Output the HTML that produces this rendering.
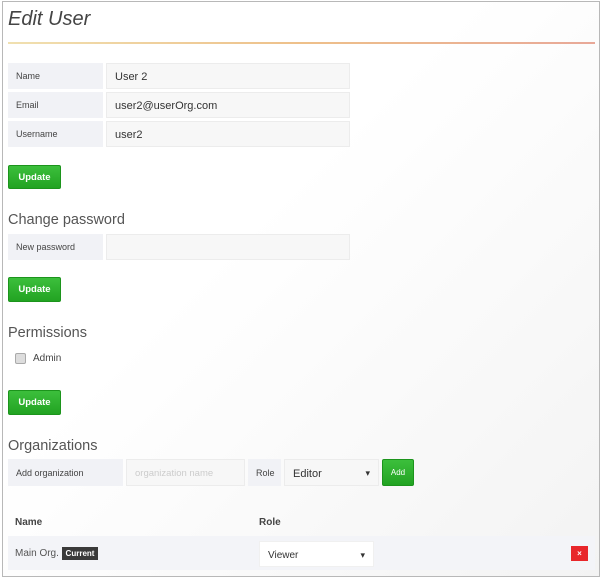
<!DOCTYPE html>
<html><head><style>
*{box-sizing:border-box;margin:0;padding:0}
body{width:603px;height:579px;background:#fff;font-family:"Liberation Sans",sans-serif;color:#333;position:relative;overflow:hidden}
.frame{position:absolute;left:2px;top:1px;width:598px;height:576px;border:1px solid #b8b8b8;background:linear-gradient(135deg,#fff 40%,#f3f3f3)}
.a{position:absolute}
.lbl{position:absolute;background:#f1f2f6;font-size:9px;color:#444;padding-left:8px;display:flex;align-items:center}
.inp{position:absolute;background:#f7f7f7;border:1px solid #ececec;font-size:11px;color:#333;padding-left:8px;padding-top:2px;display:flex;align-items:center}
.btn{position:absolute;background:linear-gradient(#3cbf3c,#22a322);border:1px solid #1c941c;color:#fff;font-size:9.5px;font-weight:bold;display:flex;align-items:center;justify-content:center;border-radius:2px}
.h{position:absolute;font-size:14.5px;color:#555}
.sel::after{content:"\25BE";position:absolute;right:8px;font-size:9px;color:#333}
</style></head><body>
<div class="frame"></div>
<div class="a" style="left:8px;top:8px;font-size:20px;font-style:italic;color:#444">Edit User</div>
<div class="a" style="left:8px;top:42px;width:587px;height:2px;background:linear-gradient(90deg,#f0e0b0,#eec08a 50%,#e8a898)"></div>

<div class="lbl" style="left:8px;top:63px;width:95px;height:26px">Name</div>
<div class="inp" style="left:106px;top:63px;width:244px;height:26px">User 2</div>
<div class="lbl" style="left:8px;top:92px;width:95px;height:26px">Email</div>
<div class="inp" style="left:106px;top:92px;width:244px;height:26px">user2@userOrg.com</div>
<div class="lbl" style="left:8px;top:121px;width:95px;height:26px">Username</div>
<div class="inp" style="left:106px;top:121px;width:244px;height:26px">user2</div>
<div class="btn" style="left:8px;top:165px;width:53px;height:24px">Update</div>

<div class="h" style="left:8px;top:212px">Change password</div>
<div class="lbl" style="left:8px;top:234px;width:95px;height:26px">New password</div>
<div class="inp" style="left:106px;top:234px;width:244px;height:26px"></div>
<div class="btn" style="left:8px;top:277px;width:53px;height:25px">Update</div>

<div class="h" style="left:8px;top:325px">Permissions</div>
<div class="a" style="left:15px;top:353px;width:11px;height:11px;border:1px solid #aaa;border-radius:2px;background:#ddd"></div>
<div class="a" style="left:33px;top:353px;font-size:10px;color:#444">Admin</div>
<div class="btn" style="left:8px;top:390px;width:53px;height:25px">Update</div>

<div class="h" style="left:8px;top:438px">Organizations</div>
<div class="lbl" style="left:8px;top:459px;width:115px;height:27px">Add organization</div>
<div class="inp" style="left:126px;top:459px;width:119px;height:27px;color:#ccc;font-size:9.5px">organization name</div>
<div class="lbl" style="left:248px;top:459px;width:33px;height:27px">Role</div>
<div class="inp sel" style="left:284px;top:459px;width:95px;height:27px;background:#f7f7f7">Editor</div>
<div class="btn" style="left:382px;top:459px;width:32px;height:27px;font-weight:normal;font-size:8px">Add</div>

<div class="a" style="left:15px;top:517px;font-size:10px;font-weight:bold;color:#444">Name</div>
<div class="a" style="left:259px;top:517px;font-size:10px;font-weight:bold;color:#444">Role</div>
<div class="a" style="left:8px;top:536px;width:587px;height:34px;background:#f3f4f8"></div>
<div class="a" style="left:15px;top:548px;font-size:10px;color:#555">Main Org.</div>
<div class="a" style="left:62px;top:547px;width:36px;height:13px;background:#3a3a3a;color:#fff;font-size:8px;font-weight:bold;text-align:center;line-height:13px">Current</div>
<div class="inp sel" style="left:259px;top:541px;width:115px;height:26px;background:#fff;border-color:#f0f0f0;font-size:10px">Viewer</div>
<div class="a" style="left:571px;top:546px;width:17px;height:15px;background:#e8262b;color:#fff;font-size:8px;font-weight:bold;text-align:center;line-height:15px">×</div>
</body></html>
